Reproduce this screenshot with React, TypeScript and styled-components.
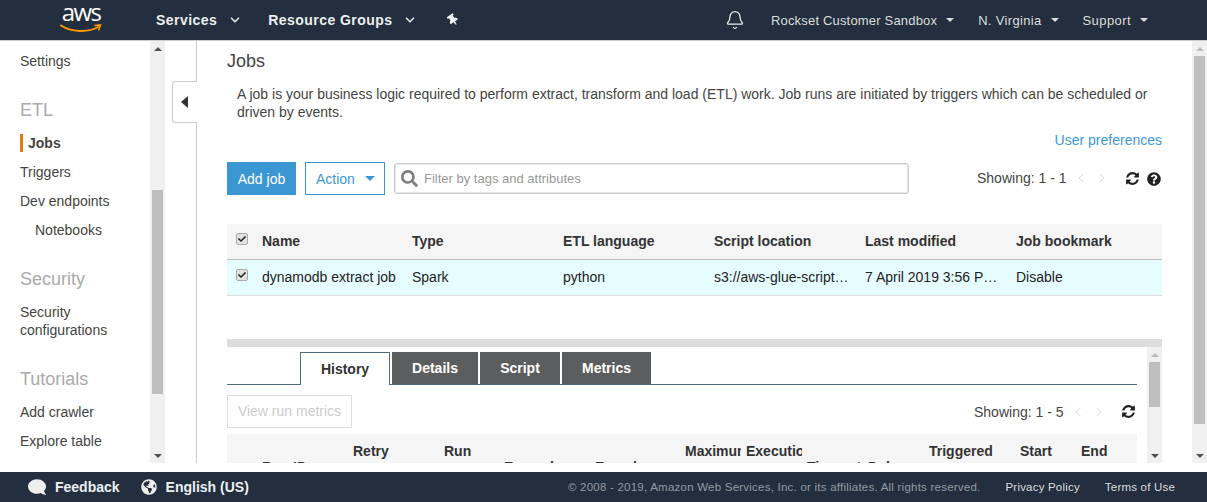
import React from "react";
import styled, { createGlobalStyle } from "styled-components";
import { FaComment, FaGlobeAmericas, FaQuestionCircle, FaSearch, FaThumbtack, FaCheck } from "react-icons/fa";
import { Bell as BellGlyph, ChevronDown, ChevronLeft, ChevronRight } from "lucide-react";

const Global = createGlobalStyle`
  html, body { margin: 0; padding: 0; background: #fff; overflow: hidden; }
  body { font-family: "Liberation Sans", Arial, sans-serif; font-size: 14px; color: #444; }
  * { box-sizing: border-box; }
`;

const Page = styled.div`
  width: 1207px;
  height: 502px;
  display: flex;
  flex-direction: column;
  overflow: hidden;
`;

const Header = styled.header`
  height: 41px;
  flex: none;
  background: #232f3e;
  border-bottom: 1px solid #ccc;
  display: flex;
  align-items: center;
  padding-left: 60px;
  color: #eee;
`;

const Logo = styled.div`
  width: 42px;
  height: 40px;
  display: flex;
  flex-direction: column;
  align-items: center;
  margin-right: 54px;
`;

const LogoText = styled.span`
  font-family: "Open Sans", sans-serif;
  font-size: 24px;
  line-height: 24px;
  letter-spacing: -1.6px;
  color: #fff;
  height: 24px;
  white-space: nowrap;
`;

const Smile = styled.svg`
  width: 42px;
  height: 10px;
`;

const NavMain = styled.a`
  font-weight: 700;
  font-size: 14px;
  letter-spacing: 0.45px;
  color: #eee;
  display: flex;
  align-items: center;
  margin-right: 26px;
  gap: 11px;
`;

const Pin = styled.span`
  display: flex;
  color: #eee;
  transform: rotate(-35deg);
  margin-left: 4px;
`;

const HeaderSpacer = styled.div`
  flex: 1;
`;

const Bell = styled.span`
  display: flex;
  color: #eee;
  margin-right: 26px;
`;

const NavItem = styled.a<{ $gap: number; $spacing: number }>`
  font-size: 13px;
  letter-spacing: ${(p) => p.$spacing}px;
  color: #ddd;
  display: flex;
  align-items: center;
  gap: 9px;
  white-space: nowrap;
  margin-right: ${(p) => p.$gap}px;
`;

const Caret = styled.i<{ $color?: string; $size?: number }>`
  display: inline-block;
  width: 0;
  height: 0;
  border-left: ${(p) => p.$size ?? 4}px solid transparent;
  border-right: ${(p) => p.$size ?? 4}px solid transparent;
  border-top: ${(p) => p.$size ?? 4}px solid ${(p) => p.$color ?? "#ddd"};
`;

const Body = styled.div`
  height: 422px;
  flex: none;
  display: flex;
  overflow: hidden;
`;

const Sidebar = styled.nav`
  width: 150px;
  flex: none;
  padding: 11px 0 0 20px;
  overflow: hidden;
`;

const SideLink = styled.div<{ $indent?: boolean }>`
  font-size: 14px;
  line-height: 18px;
  color: #444;
  margin-bottom: 11px;
  padding-left: ${(p) => (p.$indent ? 15 : 0)}px;
`;

const SideActive = styled.div`
  font-size: 14px;
  line-height: 18px;
  font-weight: 700;
  color: #444;
  margin-bottom: 11px;
  border-left: 3px solid #e47911;
  padding-left: 5px;
`;

const SideHeading = styled.div<{ $top: number; $bottom: number }>`
  font-size: 18px;
  line-height: 20px;
  color: #aaa;
  margin-top: ${(p) => p.$top}px;
  margin-bottom: ${(p) => p.$bottom}px;
`;

const Track = styled.div`
  width: 15px;
  flex: none;
  background: #f0f0f0;
  display: flex;
  flex-direction: column;
  align-items: center;
`;

const ArrowCell = styled.div`
  height: 15px;
  flex: none;
  display: flex;
  align-items: center;
  justify-content: center;
`;

const ArrowUp = styled.i<{ $color: string }>`
  width: 0;
  height: 0;
  border-left: 4px solid transparent;
  border-right: 4px solid transparent;
  border-bottom: 4px solid ${(p) => p.$color};
`;

const ArrowDown = styled.i`
  width: 0;
  height: 0;
  border-left: 4px solid transparent;
  border-right: 4px solid transparent;
  border-top: 4px solid #505050;
`;

const Thumb = styled.div<{ $top: number; $height: number }>`
  width: 11px;
  flex: none;
  background: #bebebe;
  margin-top: ${(p) => p.$top}px;
  height: ${(p) => p.$height}px;
`;

const TrackFill = styled.div`
  flex: 1;
`;

const Gutter = styled.div`
  width: 32px;
  flex: none;
  border-right: 1px solid #ccc;
  padding: 40px 0 0 7px;
`;

const CollapseTab = styled.button`
  width: 25px;
  height: 42px;
  margin-right: -1px;
  padding: 0 0 0 8px;
  background: #fff;
  border: 1px solid #ccc;
  border-right: none;
  border-radius: 3px 0 0 3px;
  display: flex;
  align-items: center;
`;

const TriLeft = styled.i`
  width: 0;
  height: 0;
  border-top: 6px solid transparent;
  border-bottom: 6px solid transparent;
  border-right: 7px solid #333;
`;

const Main = styled.main`
  flex: 1;
  min-width: 0;
  padding: 0 30px;
  overflow: hidden;
`;

const Title = styled.h1`
  margin: 0;
  font-size: 18px;
  font-weight: 400;
  line-height: 40px;
  color: #444;
`;

const Intro = styled.p`
  margin: 4px 0 0;
  padding-left: 10px;
  font-size: 14px;
  line-height: 18px;
  color: #444;
  width: 925px;
`;

const PrefRow = styled.div`
  margin-top: 9px;
  line-height: 20px;
  text-align: right;
  color: #3b9ad9;
`;

const Toolbar = styled.div`
  margin-top: 12px;
  height: 33px;
  display: flex;
  align-items: center;
`;

const PrimaryButton = styled.button`
  width: 69px;
  height: 33px;
  background: #3b97d3;
  border: none;
  color: #fff;
  font: inherit;
  padding: 0;
  margin-right: 9px;
`;

const ActionButton = styled.button`
  width: 80px;
  height: 33px;
  background: #fff;
  border: 1px solid #3b97d3;
  color: #3b97d3;
  font: inherit;
  padding: 0 0 0 10px;
  margin-right: 9px;
  display: flex;
  align-items: center;
  gap: 10px;
`;

const Filter = styled.div`
  width: 515px;
  height: 31px;
  flex: none;
  border: 1px solid #ccc;
  box-shadow: inset 0 0 0 1px #e6e6e6;
  border-radius: 3px;
  display: flex;
  align-items: center;
  padding-left: 6px;
  color: #999;
  font-size: 13px;
  gap: 6px;
`;

const SearchIcon = styled.span`
  display: flex;
  color: #7f7f7f;
`;

const Pager = styled.div<{ $left: number; $lift?: boolean }>`
  margin-left: ${(p) => p.$left}px;
  padding-bottom: ${(p) => (p.$lift ? 2 : 0)}px;
  display: flex;
  align-items: center;
  color: #444;
  white-space: nowrap;
  flex: none;
`;

const PagerArrows = styled.span`
  display: flex;
  gap: 7px;
  margin-left: 7px;
  color: #ccc;
`;

const IconDark = styled.span<{ $left: number }>`
  display: flex;
  flex: none;
  color: #222;
  margin-left: ${(p) => p.$left}px;
`;

const JobsTable = styled.div`
  margin-top: 29px;
`;

const JobRow = styled.div<{ $head?: boolean }>`
  height: 36px;
  padding-bottom: 2px;
  display: grid;
  grid-template-columns: 25px 150px 151px 151px 151px 151px 1fr;
  align-items: center;
  background: ${(p) => (p.$head ? "#f5f5f5" : "#e6fdff")};
  border-bottom: 1px solid ${(p) => (p.$head ? "#bbb" : "#ddd")};
  color: ${(p) => (p.$head ? "#333" : "#222")};
  font-weight: ${(p) => (p.$head ? 700 : 400)};
`;

const CheckCell = styled.div`
  padding-left: 9px;
  display: flex;
  align-items: center;
  height: 100%;
  padding-bottom: 3px;
`;

const Box = styled.span`
  width: 12px;
  height: 12px;
  border: 1px solid #aaa;
  border-radius: 2px;
  background: #e2e2e2;
  display: flex;
  align-items: center;
  justify-content: center;
  color: #222;
`;

const Cell = styled.div`
  padding: 0 6px 0 10px;
  white-space: nowrap;
  overflow: hidden;
  text-overflow: ellipsis;
`;

const Divider = styled.div`
  margin-top: 43px;
  height: 8px;
  background: #ddd;
`;

const Lower = styled.div`
  display: flex;
  height: 116px;
`;

const LowerContent = styled.div`
  flex: 1;
  min-width: 0;
  padding-right: 10px;
  overflow: hidden;
`;

const TabBar = styled.div`
  margin-top: 5px;
  height: 33px;
  border-bottom: 1px solid #4f6b7c;
  padding-left: 73px;
  display: flex;
  gap: 2px;
`;

const Tab = styled.div<{ $active?: boolean; $width: number }>`
  width: ${(p) => p.$width}px;
  height: ${(p) => (p.$active ? 33 : 32)}px;
  display: flex;
  align-items: center;
  justify-content: center;
  font-weight: 700;
  background: ${(p) => (p.$active ? "#fff" : "#5c5d5f")};
  color: ${(p) => (p.$active ? "#333" : "#fff")};
  ${(p) => (p.$active ? "border: 1px solid #4f6b7c; border-bottom: none;" : "")}
`;

const LowerBar = styled.div`
  margin-top: 10px;
  height: 33px;
  display: flex;
  align-items: center;
`;

const GhostButton = styled.button`
  width: 125px;
  height: 33px;
  flex: none;
  background: #fff;
  border: 1px solid #ddd;
  color: #ccc;
  font: inherit;
  padding: 0 0 2px;
`;

const RunsHead = styled.div`
  margin-top: 6px;
  height: 36px;
  padding-left: 30px;
  background: #f5f5f5;
  display: grid;
  grid-template-columns: 91px 91px 60px 91px 90px 61px 61px 61px 61px 91px 61px 61px;
  font-weight: 700;
  color: #333;
  line-height: 16px;
`;

const RunsCell = styled.div`
  padding: 9px 0 0 5px;
  overflow: hidden;
  white-space: nowrap;
`;

const Footer = styled.footer`
  margin-top: 9px;
  height: 30px;
  flex: none;
  background: #232f3e;
  display: flex;
  align-items: center;
  padding: 0 32px 0 28px;
  color: #eee;
`;

const FootStrong = styled.span<{ $gap: number }>`
  display: flex;
  align-items: center;
  gap: 9px;
  font-weight: 700;
  margin-right: ${(p) => p.$gap}px;
`;

const Bubble = styled.span`
  display: flex;
  transform: scaleX(-1);
`;

const Copyright = styled.span`
  margin-left: auto;
  font-size: 11.5px;
  letter-spacing: 0.23px;
  color: #929aa3;
`;

const FootLink = styled.a`
  font-size: 11.5px;
  letter-spacing: 0.2px;
  color: #ddd;
  margin-left: 25px;
`;

const Bar = ({ top, height, upColor = "#505050" }: { top: number; height: number; upColor?: string }) => (
  <Track>
    <ArrowCell><ArrowUp $color={upColor} /></ArrowCell>
    <Thumb $top={top} $height={height} />
    <TrackFill />
    <ArrowCell><ArrowDown /></ArrowCell>
  </Track>
);

const Check = () => (
  <Box><FaCheck size={8} /></Box>
);

const RefreshIcon = () => (
  <svg width="15" height="15" viewBox="0 0 1792 1792" fill="currentColor">
    <path d="M1639 1056q0 5-1 7-64 268-268 434.500t-478 166.500q-146 0-282.500-55t-243.500-157l-129 129q-19 19-45 19t-45-19-19-45v-448q0-26 19-45t45-19h448q26 0 45 19t19 45-19 45l-137 137q71 66 161 102t187 36q134 0 250-65t186-179q11-17 53-117 8-23 30-23h192q13 0 22.500 9.500t9.500 22.500zm25-800v448q0 26-19 45t-45 19h-448q-26 0-45-19t-19-45 19-45l138-138q-148-137-349-137-134 0-250 65t-186 179q-11 17-53 117-8 23-30 23h-199q-13 0-22.500-9.500t-9.500-22.500v-7q65-268 270-434.500t480-166.500q146 0 284 55.500t245 156.500l130-129q19-19 45-19t45 19 19 45z" />
  </svg>
);

const runs: [string, string][] = [
  ["", "Run ID"], ["Retry", ""], ["Run", ""], ["", "Errors logs"], ["", "Error logs"], ["Maximum", ""],
  ["Execution", ""], ["", "Timeout"], ["", "Delay"], ["Triggered", ""], ["Start", ""], ["End", ""],
];

export default function App() {
  return (
    <Page>
      <Global />
      <Header>
        <Logo>
          <LogoText>aws</LogoText>
          <Smile viewBox="0 0 42 10">
            <path d="M1 1.500 C11 8 28 9 38 3" fill="none" stroke="#f90" strokeWidth="2" strokeLinecap="round" />
            <path d="M34.500 1.500 L40.500 1 L38.500 6.500" fill="none" stroke="#f90" strokeWidth="1.600" />
          </Smile>
        </Logo>
        <NavMain>Services <ChevronDown size={14} strokeWidth={3} color="#ddd" /></NavMain>
        <NavMain>Resource Groups <ChevronDown size={14} strokeWidth={3} color="#ddd" /></NavMain>
        <Pin><FaThumbtack size={12} /></Pin>
        <HeaderSpacer />
        <Bell><BellGlyph size={20} strokeWidth={1.500} /></Bell>
        <NavItem $gap={24} $spacing={0.18}>Rockset Customer Sandbox <Caret /></NavItem>
        <NavItem $gap={24} $spacing={0.33}>N. Virginia <Caret /></NavItem>
        <NavItem $gap={59} $spacing={0.42}>Support <Caret /></NavItem>
      </Header>
      <Body>
        <Sidebar>
          <SideLink>Settings</SideLink>
          <SideHeading $top={30} $bottom={14}>ETL</SideHeading>
          <SideActive>Jobs</SideActive>
          <SideLink>Triggers</SideLink>
          <SideLink>Dev endpoints</SideLink>
          <SideLink $indent>Notebooks</SideLink>
          <SideHeading $top={30} $bottom={14}>Security</SideHeading>
          <SideLink>Security configurations</SideLink>
          <SideHeading $top={30} $bottom={14}>Tutorials</SideHeading>
          <SideLink>Add crawler</SideLink>
          <SideLink>Explore table</SideLink>
        </Sidebar>
        <Bar top={134} height={204} />
        <Gutter>
          <CollapseTab aria-label="Collapse"><TriLeft /></CollapseTab>
        </Gutter>
        <Main>
          <Title>Jobs</Title>
          <Intro>A job is your business logic required to perform extract, transform and load (ETL) work. Job runs are initiated by triggers which can be scheduled or driven by events.</Intro>
          <PrefRow>User preferences</PrefRow>
          <Toolbar>
            <PrimaryButton>Add job</PrimaryButton>
            <ActionButton>Action <Caret $color="#3b97d3" $size={5} /></ActionButton>
            <Filter>
              <SearchIcon><FaSearch size={17} /></SearchIcon>
              Filter by tags and attributes
            </Filter>
            <Pager $left={68} $lift>
              Showing: 1 - 1
              <PagerArrows><ChevronLeft size={14} strokeWidth={1.500} /><ChevronRight size={14} strokeWidth={1.500} /></PagerArrows>
            </Pager>
            <IconDark $left={16}><RefreshIcon /></IconDark>
            <IconDark $left={7}><FaQuestionCircle size={14} /></IconDark>
          </Toolbar>
          <JobsTable>
            <JobRow $head>
              <CheckCell><Check /></CheckCell>
              <Cell>Name</Cell>
              <Cell>Type</Cell>
              <Cell>ETL language</Cell>
              <Cell>Script location</Cell>
              <Cell>Last modified</Cell>
              <Cell>Job bookmark</Cell>
            </JobRow>
            <JobRow>
              <CheckCell><Check /></CheckCell>
              <Cell>dynamodb extract job</Cell>
              <Cell>Spark</Cell>
              <Cell>python</Cell>
              <Cell>s3://aws-glue-scripts-rockset/root</Cell>
              <Cell>7 April 2019 3:56 PM UTC+1</Cell>
              <Cell>Disable</Cell>
            </JobRow>
          </JobsTable>
          <Divider />
          <Lower>
            <LowerContent>
              <TabBar>
                <Tab $active $width={90}>History</Tab>
                <Tab $width={86}>Details</Tab>
                <Tab $width={80}>Script</Tab>
                <Tab $width={89}>Metrics</Tab>
              </TabBar>
              <LowerBar>
                <GhostButton>View run metrics</GhostButton>
                <Pager $left={622}>
                  Showing: 1 - 5
                  <PagerArrows><ChevronLeft size={14} strokeWidth={1.500} /><ChevronRight size={14} strokeWidth={1.500} /></PagerArrows>
                </Pager>
                <IconDark $left={15}><RefreshIcon /></IconDark>
              </LowerBar>
              <RunsHead>
                {runs.map(([a, b], i) => (
                  <RunsCell key={i}>
                    {a || "\u00a0"}
                    <div>{b || "\u00a0"}</div>
                  </RunsCell>
                ))}
              </RunsHead>
            </LowerContent>
            <Bar top={0} height={45} upColor="#bbb" />
          </Lower>
        </Main>
        <Bar top={0} height={368} upColor="#bbb" />
      </Body>
      <Footer>
        <FootStrong $gap={21}><Bubble><FaComment size={18} /></Bubble> Feedback</FootStrong>
        <FootStrong $gap={0}><FaGlobeAmericas size={16} /> English (US)</FootStrong>
        <Copyright>© 2008 - 2019, Amazon Web Services, Inc. or its affiliates. All rights reserved.</Copyright>
        <FootLink>Privacy Policy</FootLink>
        <FootLink>Terms of Use</FootLink>
      </Footer>
    </Page>
  );
}
